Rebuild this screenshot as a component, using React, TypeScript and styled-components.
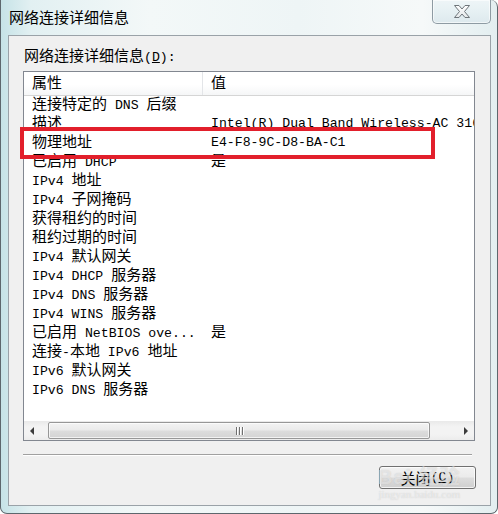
import React from "react";
import styled, { createGlobalStyle } from "styled-components";

const GlobalStyle = createGlobalStyle`
  html, body {
    margin: 0;
    padding: 0;
    background: #ffffff;
  }
  * {
    box-sizing: border-box;
  }
`;

// CJK runs and latin runs use different fonts, like SimSun did
const Han = styled.span`
  font-family: "Noto Sans CJK SC", sans-serif;
  font-size: 15px;
`;

const Lat = styled.span`
  font-family: "Liberation Mono", monospace;
  font-size: 13.2px;
`;

const Mixed: React.FC<{ text: string }> = ({ text }) => {
  const parts = text.split(/([\u3000-\u9fff\uff00-\uffef]+)/).filter(Boolean);
  return (
    <>
      {parts.map((p, i) =>
        /[\u3000-\u9fff]/.test(p) ? <Han key={i}>{p}</Han> : <Lat key={i}>{p}</Lat>
      )}
    </>
  );
};

const Window = styled.div`
  position: relative;
  width: 498px;
  height: 514px;
  display: flex;
  flex-direction: column;
  border: 1px solid #5d676d;
  border-top: none;
  border-radius: 0 7px 7px 7px;
  background: linear-gradient(90deg, #c6e3e7 0%, #e2f0f2 6%, #f3f8f8 30%, #eef5f6 60%, #f6f9f9 85%, #e3eef0 100%);
  overflow: hidden;
`;

const TitleBar = styled.div`
  height: 35px;
  display: flex;
  justify-content: space-between;
  align-items: flex-start;
  flex-shrink: 0;
`;

const Title = styled.div`
  padding: 7px 0 0 8px;
  line-height: 19px;
  color: #000;
`;

const CloseBtn = styled.div`
  width: 59px;
  height: 24px;
  margin-right: 6px;
  display: flex;
  align-items: center;
  justify-content: center;
  border: 1px solid #8e9ba3;
  border-top: none;
  border-radius: 0 0 5px 5px;
  background: linear-gradient(180deg, #eef5f7 0%, #e6f0f3 50%, #dde9ed 100%);
  box-shadow: inset 0 0 0 1px rgba(255, 255, 255, 0.6);
`;

const Client = styled.div`
  position: relative;
  flex: 1;
  margin: 0 6px 7px 7px;
  border: 1px solid #9aa2a8;
  background: #f0f0f0;
  padding: 9px 15px 0 14px;
  display: flex;
  flex-direction: column;
`;

const Label = styled.div`
  line-height: 19px;
  padding-left: 1px;
  color: #000;
`;

const Underline = styled.span`
  text-decoration: underline;
  text-underline-offset: 1px;
`;

const ListView = styled.div`
  margin-top: 4px;
  height: 370px;
  border: 1px solid #828790;
  background: #ffffff;
  display: flex;
  flex-direction: column;
  overflow: hidden;
`;

const Header = styled.div`
  position: relative;
  z-index: 1;
  height: 24px;
  flex-shrink: 0;
  display: grid;
  grid-template-columns: 179px 1fr;
  background: linear-gradient(180deg, #ffffff 0%, #ffffff 55%, #f5f6f7 100%);
  border-bottom: 1px solid #d5d5d5;
`;

const HeaderCell = styled.div<{ $divider?: boolean }>`
  padding: 0 0 0 8px;
  line-height: 19px;
  color: #000;
  border-right: ${(p) => (p.$divider ? "1px solid #e3e5e8" : "none")};
`;

const Body = styled.div`
  flex: 1;
  margin-top: -3px;
  overflow: hidden;
`;

const Row = styled.div`
  display: grid;
  grid-template-columns: 179px 1fr;
  height: 19px;
  line-height: 19px;
  white-space: nowrap;
  color: #000;
`;

const Cell = styled.div`
  padding-left: 8px;
`;

const ScrollBar = styled.div`
  height: 19px;
  flex-shrink: 0;
  display: flex;
  align-items: center;
  background: linear-gradient(180deg, #e9e9e9 0%, #f3f3f3 30%, #f3f3f3 70%, #ececec 100%);
`;

const ArrowBtn = styled.div`
  width: 17px;
  height: 19px;
  display: flex;
  align-items: center;
  justify-content: center;
  flex-shrink: 0;
`;

const Track = styled.div`
  flex: 1;
  height: 100%;
  display: flex;
  align-items: center;
`;

const Thumb = styled.div`
  margin-left: 7px;
  width: 382px;
  height: 17px;
  display: flex;
  align-items: center;
  justify-content: center;
  gap: 2px;
  border: 1px solid #979797;
  border-radius: 2px;
  background: linear-gradient(180deg, #f3f3f3 0%, #ebebeb 45%, #dcdcdc 55%, #d4d4d4 100%);
  box-shadow: inset 0 0 0 1px rgba(255, 255, 255, 0.7);
`;

const Grip = styled.span`
  width: 1px;
  height: 8px;
  background: #6f6f6f;
  box-shadow: 1px 0 0 #ffffff;
`;

const Separator = styled.div`
  margin: 13px 3px 0 0;
  height: 2px;
  border-top: 1px solid #a0a0a0;
  border-bottom: 1px solid #ffffff;
`;

const ButtonRow = styled.div`
  display: flex;
  justify-content: flex-end;
  margin-top: 10px;
`;

const Button = styled.div`
  position: relative;
  width: 97px;
  height: 23px;
  margin-right: -1px;
  display: flex;
  align-items: center;
  justify-content: center;
  line-height: 19px;
  border: 1px solid #707070;
  border-radius: 3px;
  background: linear-gradient(180deg, #f2f2f2 0%, #ebebeb 49%, #dddddd 51%, #cfcfcf 100%);
  box-shadow: inset 0 0 0 1px rgba(255, 255, 255, 0.75);
  color: #000;
`;

const Watermark = styled.div`
  position: absolute;
  left: 377px;
  top: 466px;
  display: flex;
  flex-direction: column;
  align-items: center;
  pointer-events: none;
  color: rgba(255, 255, 255, 0.5);
  text-shadow: 0 0 1px rgba(120, 120, 120, 0.35);
`;

const WatermarkBig = styled.div`
  font-family: "Liberation Sans", "Noto Sans CJK SC", sans-serif;
  font-weight: bold;
  font-size: 20px;
  line-height: 22px;
  letter-spacing: 1px;
`;

const WatermarkSmall = styled.div`
  font-family: "Liberation Serif", serif;
  font-size: 11px;
  line-height: 12px;
`;

const Highlight = styled.div`
  position: absolute;
  left: 11px;
  top: 91px;
  width: 415px;
  height: 32px;
  border: 4px solid #e21f2b;
  pointer-events: none;
`;

const rows: [string, string][] = [
  ["连接特定的 DNS 后缀", ""],
  ["描述", "Intel(R) Dual Band Wireless-AC 3160"],
  ["物理地址", "E4-F8-9C-D8-BA-C1"],
  ["已启用 DHCP", "是"],
  ["IPv4 地址", ""],
  ["IPv4 子网掩码", ""],
  ["获得租约的时间", ""],
  ["租约过期的时间", ""],
  ["IPv4 默认网关", ""],
  ["IPv4 DHCP 服务器", ""],
  ["IPv4 DNS 服务器", ""],
  ["IPv4 WINS 服务器", ""],
  ["已启用 NetBIOS ove...", "是"],
  ["连接-本地 IPv6 地址", ""],
  ["IPv6 默认网关", ""],
  ["IPv6 DNS 服务器", ""],
];

const CloseX = () => (
  <svg width="18" height="15" viewBox="0 0 18 15">
    <defs>
      <linearGradient id="xg" x1="0" y1="0" x2="0" y2="1">
        <stop offset="0" stopColor="#ffffff" />
        <stop offset="1" stopColor="#e4e8ea" />
      </linearGradient>
    </defs>
    <path
      d="M1.5 1.5 H6 L9 5 L12 1.5 H16.5 L11.5 7.5 L16.5 13.5 H12 L9 10 L6 13.5 H1.5 L6.5 7.5 Z"
      fill="url(#xg)"
      stroke="#6e757a"
      strokeWidth="1"
      strokeLinejoin="round"
    />
  </svg>
);

const LeftArrow = () => (
  <svg width="5" height="8" viewBox="0 0 5 8">
    <path d="M4 0 L0 4 L4 8 Z" fill="#3c3c3c" />
  </svg>
);

const RightArrow = () => (
  <svg width="5" height="8" viewBox="0 0 5 8">
    <path d="M1 0 L5 4 L1 8 Z" fill="#3c3c3c" />
  </svg>
);

export default function App() {
  return (
    <>
      <GlobalStyle />
      <Window>
        <TitleBar>
          <Title>
            <Han>网络连接详细信息</Han>
          </Title>
          <CloseBtn>
            <CloseX />
          </CloseBtn>
        </TitleBar>
        <Client>
          <Label>
            <Han>网络连接详细信息</Han>
            <Lat>
              (<Underline>D</Underline>):
            </Lat>
          </Label>
          <ListView>
            <Header>
              <HeaderCell $divider>
                <Han>属性</Han>
              </HeaderCell>
              <HeaderCell>
                <Han>值</Han>
              </HeaderCell>
            </Header>
            <Body>
              {rows.map(([name, value]) => (
                <Row key={name}>
                  <Cell>
                    <Mixed text={name} />
                  </Cell>
                  <Cell>{value && <Mixed text={value} />}</Cell>
                </Row>
              ))}
            </Body>
            <ScrollBar>
              <ArrowBtn>
                <LeftArrow />
              </ArrowBtn>
              <Track>
                <Thumb>
                  <Grip />
                  <Grip />
                  <Grip />
                </Thumb>
              </Track>
              <ArrowBtn>
                <RightArrow />
              </ArrowBtn>
            </ScrollBar>
          </ListView>
          <Separator />
          <ButtonRow>
            <Button>
              <Han>关闭</Han>
              <Lat>
                (<Underline>C</Underline>)
              </Lat>
            </Button>
          </ButtonRow>
          <Highlight />
        </Client>
        <Watermark>
          <WatermarkBig>Bai 经验</WatermarkBig>
          <WatermarkSmall>jingyan.baidu.com</WatermarkSmall>
        </Watermark>
      </Window>
    </>
  );
}
